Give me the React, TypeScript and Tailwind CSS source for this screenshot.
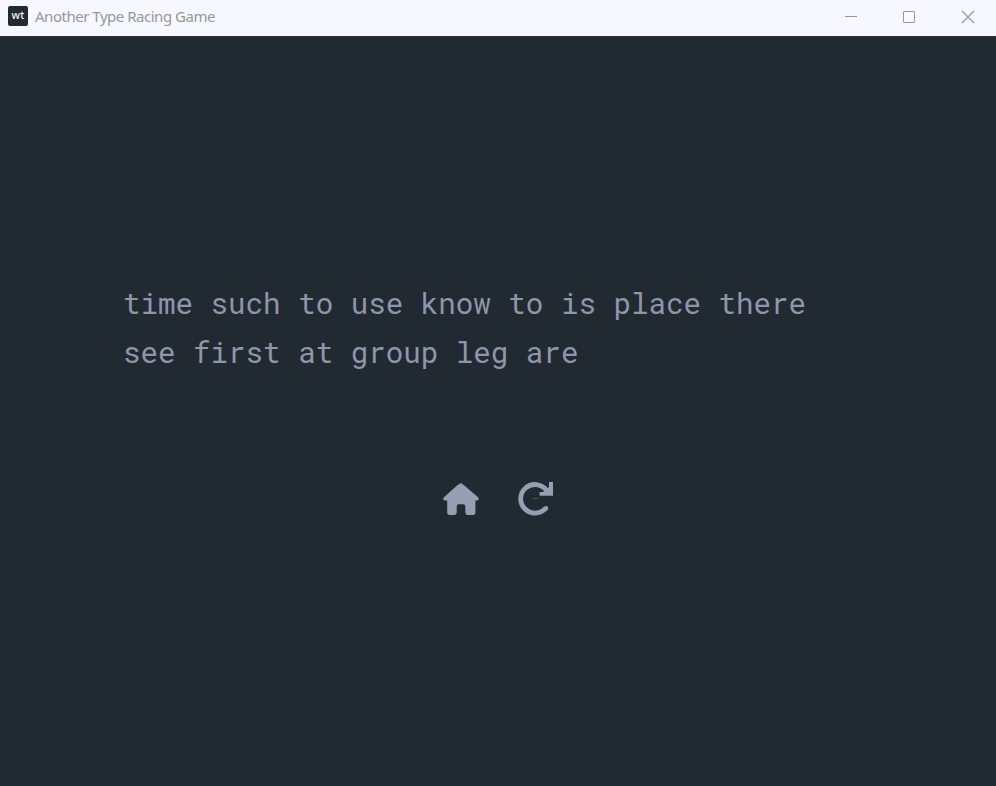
const lines = ['time such to use know to is place there', 'see first at group leg are'];

function TitleBar() {
  return (
    <header className="flex h-9 shrink-0 items-start bg-[#f7f8ff] text-[#929a96]">
      <div className="ml-2 mt-1.5 flex h-5 w-5 items-center justify-center rounded-[2px] bg-[#212a31]">
        <span className="pb-px font-['Noto_Sans',sans-serif] text-[10.5px] font-medium leading-none tracking-[0.2px] text-[#f3f6f7]">wt</span>
      </div>
      <h1 className="ml-[7px] mt-[6px] whitespace-nowrap font-['Noto_Sans',sans-serif] text-[15px] leading-5 tracking-[-0.48px]">
        Another Type Racing Game
      </h1>
      <div className="ml-auto mr-[21px] mt-[10px] flex gap-[45px]">
        <svg width="14" height="14" viewBox="0 0 14 14" fill="none" stroke="currentColor">
          <path d="M2 6.5h12" />
        </svg>
        <svg width="14" height="14" viewBox="0 0 14 14" fill="none" stroke="currentColor">
          <rect x="1.5" y="1.5" width="11" height="11" rx="0.5" />
        </svg>
        <svg width="14" height="14" viewBox="0 0 14 14" fill="none" stroke="currentColor">
          <path d="M1 1l12 12M13 1L1 13" strokeWidth="1.15" />
        </svg>
      </div>
    </header>
  );
}

function HomeIcon() {
  return (
    <svg width="36" height="34" viewBox="0 0 36 34" fill="#979eb2">
      <path d="M18 1L22 4L35 15.2Q37 18 34 18.4H32.4V30.3Q32.4 33 30 33H24.5Q22.3 33 22.3 30.6V24.4Q22.3 22.3 20.2 22.3H15.8Q13.7 22.3 13.7 24.4V30.6Q13.7 33 11.3 33H6.5Q4.2 33 4.2 30.5V18.4H2Q-1 18 1 15.2L14.3 3.3Z" />
    </svg>
  );
}

function RestartIcon() {
  return (
    <svg width="36" height="36" viewBox="0 0 36 36" fill="none">
      <path d="M27.6 27.4A14.3 14.3 0 1 1 28.3 9" stroke="#979eb2" strokeWidth="4.8" />
      <circle cx="28" cy="27.2" r="2.3" fill="#979eb2" />
      <path d="M31 1H35V14.8H21.6V11H25.2L31 6Z" fill="#979eb2" />
      <path d="M15 17.5h5" stroke="#46504f" />
    </svg>
  );
}

export default function App() {
  return (
    <div className="flex h-screen w-full flex-col overflow-hidden bg-[#222a31]">
      <TitleBar />
      <main className="flex flex-1 flex-col border-t border-[#29313c]">
        <div className="ml-[123px] mt-[242px] whitespace-pre font-['Roboto_Mono','Liberation_Mono',monospace] text-[29.19px] leading-[48.5px] text-[#8f96ab]">
          {lines.map((line) => (
            <p key={line}>{line}</p>
          ))}
        </div>
        <div className="mt-[105px] flex items-center justify-center gap-[39px]">
          <button aria-label="Home"><HomeIcon /></button>
          <button aria-label="Restart"><RestartIcon /></button>
        </div>
      </main>
    </div>
  );
}
